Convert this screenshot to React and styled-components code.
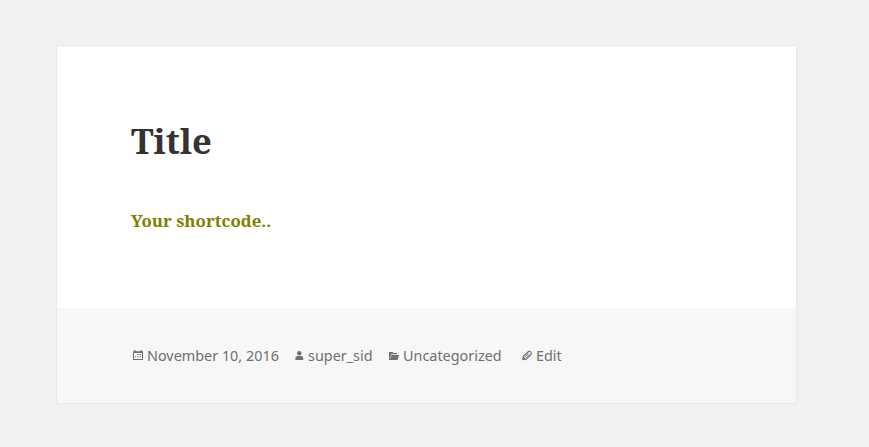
import React from "react";
import styled, { createGlobalStyle } from "styled-components";

const Global = createGlobalStyle`
  *{box-sizing:border-box}
  body{margin:0;background:#f1f1f1}
`;
const Page = styled.main`
  height:447px;
  padding:45px 72px 43px 56px;
  background:#f1f1f1;
  overflow:hidden;
`;
const Article = styled.article`
  height:359px;
  display:flex;
  flex-direction:column;
  border:1px solid #e8e8e8;
  background:#fff;
`;
const Content = styled.div`
  flex:1;
  padding:74px 74px 0;
  font-family:"Noto Serif","Droid Serif","DejaVu Serif",serif;
`;
const Title = styled.h1`
  margin:0;
  font-size:34.6px;
  line-height:42px;
  color:#333;
`;
const Shortcode = styled.p`
  margin:45px 0 0;
  font-size:16.85px;
  line-height:28px;
  font-weight:700;
  color:#808000;
`;
const Footer = styled.footer`
  height:95px;
  padding:36px 74px 0;
  display:flex;
  align-items:flex-start;
  background:#f7f7f7;
  font:14.4px/24px "Noto Sans",sans-serif;
  color:#707070;
`;
const Meta = styled.span`
  display:flex;
  align-items:center;
  height:24px;
  width:${p => p.$w}px;
  white-space:nowrap;
`;
const Icon = styled.svg`
  width:16px;
  height:16px;
  flex:none;
  fill:#707078;
`;

const CalendarIcon = () => (
  <Icon viewBox="0 0 16 16">
    <path fillRule="evenodd" d="M2 3.2h1.2v-.9h1.6v.9h4.4v-.9h1.6v.9H12V12H2zM3 5V11h8V5z" />
    <path d="M5.9 6h1v1h-1zM7.5 6h1v1h-1zM9.1 6h1v1h-1zM4 8.2h1v1H4zM5.9 8.2h1v1h-1zM7.5 8.2h1v1h-1zM9.1 8.2h1v1h-1z" />
  </Icon>
);
const UserIcon = () => (
  <Icon viewBox="0 0 16 16">
    <circle cx="7.3" cy="5.2" r="2.2" />
    <path d="M3.4 12v-1.8C3.4 8.8 4.3 8 5.6 8H9c1.3 0 2.2.8 2.2 2.2V12z" />
  </Icon>
);
const FolderIcon = () => (
  <Icon viewBox="0 0 16 16">
    <path d="M2 4h3.6l1 1H10v1.2H4.2L3 10.2V12H2z" />
    <path d="M4.5 7H12l-1.4 5H2.9z" />
  </Icon>
);
const PencilIcon = () => (
  <Icon viewBox="0 0 16 16">
    <path fillRule="evenodd" d="M2.2 12.2l.5-4.1 4.5-4.4c1.3-1.2 2.8-1.2 3.9-.2 1.1 1.1 1.1 2.6-.1 3.9l-4.5 4.4zM3.6 8.7l2.2 2.2 4.5-4.4c.7-.8.7-1.5.1-2.1s-1.4-.6-2.2.1z" />
    <path d="M4.4 8.7l3.7-3.6.6.6-3.7 3.6zM5.6 9.9l3.7-3.6.5.5-3.7 3.6z" />
  </Icon>
);

export default function App() {
  return (
    <Page>
      <Global />
      <Article>
        <Content>
          <Title>Title</Title>
          <Shortcode>Your shortcode..</Shortcode>
        </Content>
        <Footer>
          <Meta $w={161}><CalendarIcon />November 10, 2016</Meta>
          <Meta $w={95}><UserIcon />super_sid</Meta>
          <Meta $w={133}><FolderIcon />Uncategorized</Meta>
          <Meta $w={50}><PencilIcon />Edit</Meta>
        </Footer>
      </Article>
    </Page>
  );
}
